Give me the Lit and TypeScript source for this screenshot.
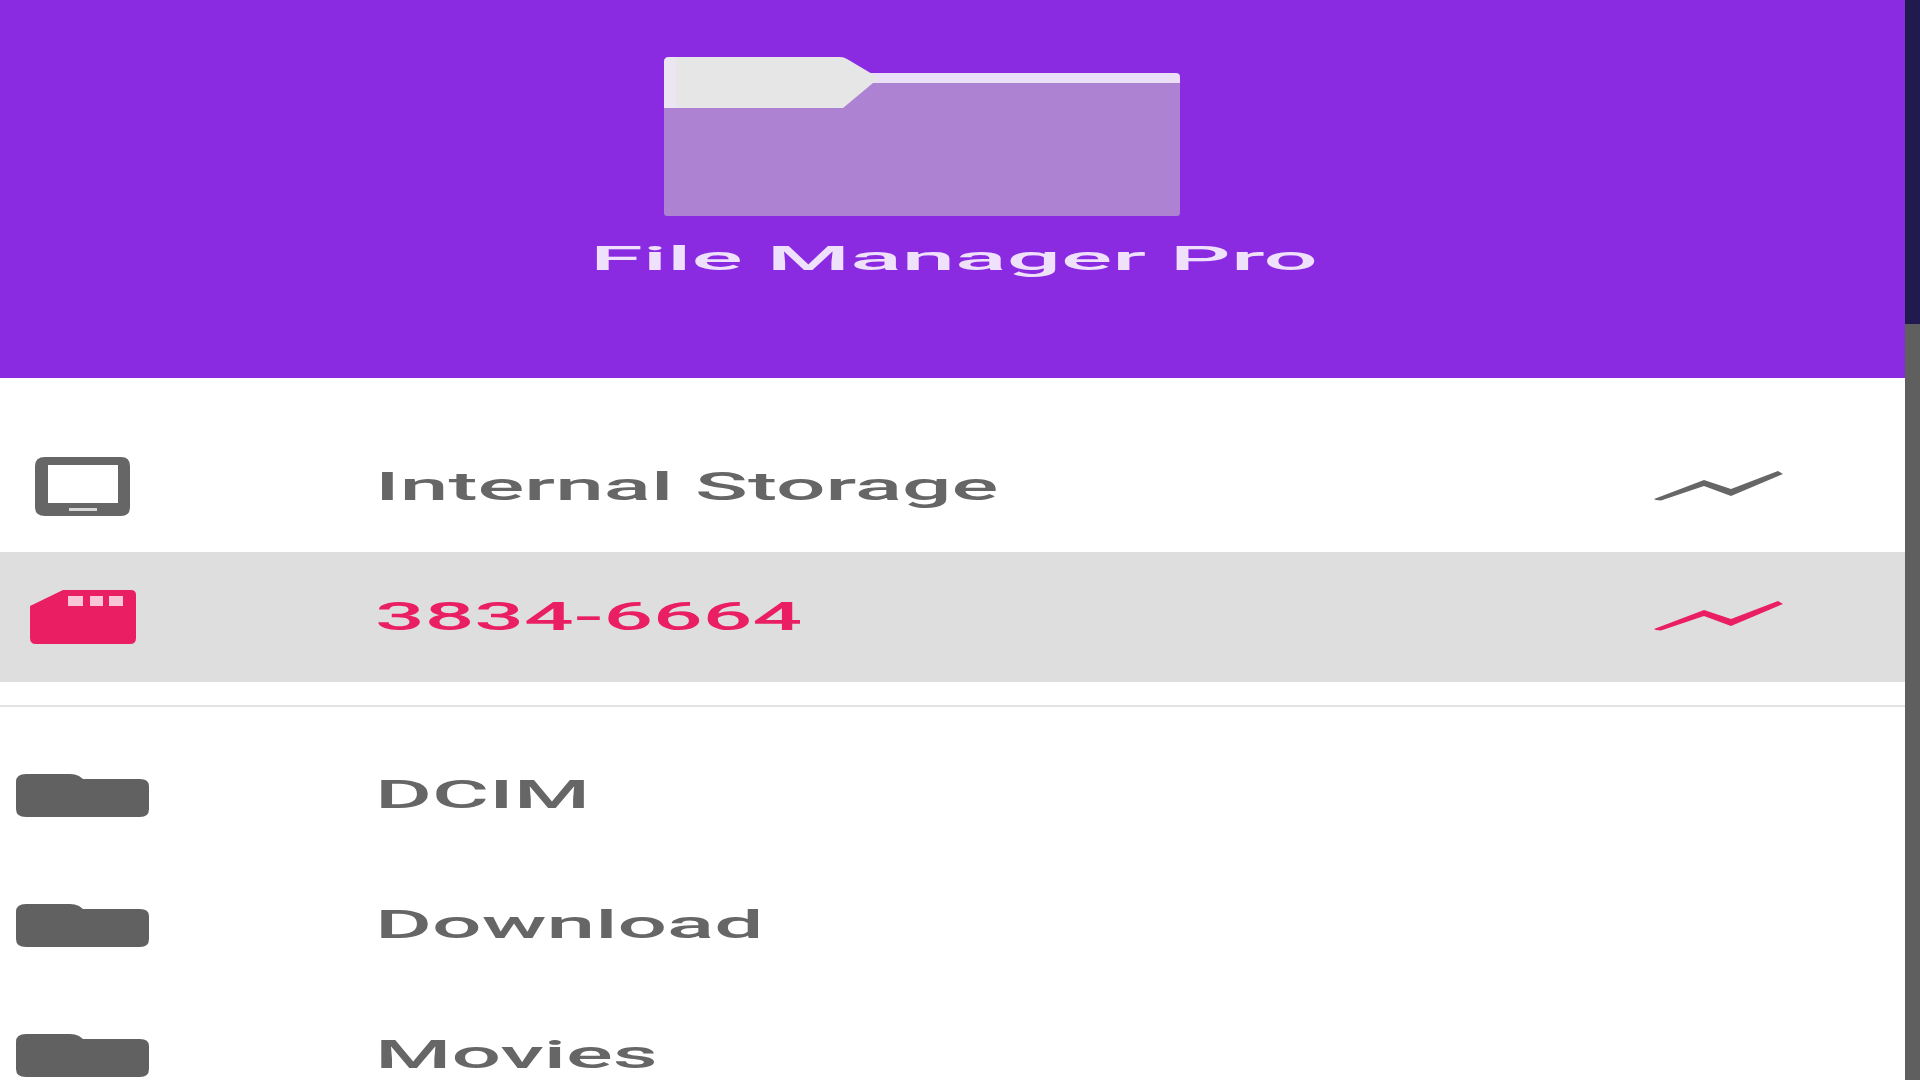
import { LitElement, html, css, svg } from "lit";
import { customElement } from "lit/decorators.js";

const folders = ["DCIM", "Download", "Movies"];

const trendIcon = svg`<svg class="trend" width="132" height="32" viewBox="0 0 132 32">
  <path d="M0 28 L2 29 L7 29.5 L50 15 L77 25 L129 3 L124 0 L77 18 L50 9 Z" fill="currentColor" />
</svg>`;

const tabletIcon = svg`<svg width="96" height="60" viewBox="0 0 96 60">
  <path fill-rule="evenodd" fill="currentColor" d="M10 0 H86 Q95 0 95 9 V50 Q95 59 86 59 H10 Q0 59 0 50 V9 Q0 0 10 0 Z M13 8 V46 H83 V8 Z" />
  <rect x="34" y="51" width="28" height="3" fill="#fff" opacity="0.75" />
</svg>`;

const sdIcon = svg`<svg width="106" height="54" viewBox="0 0 106 54">
  <path fill="currentColor" d="M33 0 H101 Q106 0 106 5 V48 Q106 54 100 54 H6 Q0 54 0 48 V16 Z" />
  <rect x="38" y="6" width="15" height="10" fill="#f9c6d8" />
  <rect x="60" y="6" width="13" height="10" fill="#f9c6d8" />
  <rect x="79" y="6" width="14" height="10" fill="#f9c6d8" />
</svg>`;

const folderIcon = svg`<svg width="133" height="43" viewBox="0 0 133 43">
  <path fill="#616161" d="M10 0 H54 Q59 0 63 2 L67 5 H124 Q133 5 133 12 V35 Q133 43 124 43 H10 Q0 43 0 35 V8 Q0 0 10 0 Z" />
</svg>`;

const logo = svg`<svg width="516" height="160" viewBox="0 0 516 160">
  <rect x="0" y="24" width="516" height="135" rx="3" fill="#ae82d3" />
  <path fill="#ebdff8" d="M200 16 H512 Q516 16 516 20 V26 H200 Z" />
  <path fill="#e6e6e6" d="M5 0 H176 Q180 0 183 2 L215 21 L179 51 H0 V5 Q0 0 5 0 Z" />
  <path fill="#f0e6fa" d="M0 5 Q0 0 5 0 H12 V51 H0 Z" opacity="0.6" />
</svg>`;

@customElement("app-root")
export class AppRoot extends LitElement {
  static styles = css`
    :host {
      display: flex;
      width: 1920px;
      height: 1080px;
      overflow: hidden;
      background: #fff;
      font-family: Roboto, "Liberation Sans", sans-serif;
    }

    .drawer {
      flex: 1;
      min-width: 0;
    }

    .header {
      height: 378px;
      box-sizing: border-box;
      padding-top: 57px;
      background: #8a2be2;
    }

    .logo {
      display: block;
      margin-left: 664px;
    }

    .logo svg {
      display: block;
    }

    .title {
      margin: 23px 0 0 590px;
      width: max-content;
      font-size: 33px;
      line-height: 38px;
      font-weight: 500;
      color: #efe0fb;
      transform: scaleX(2.9);
      transform-origin: left center;
      white-space: nowrap;
    }

    .list {
      padding-top: 44px;
    }

    .row {
      display: grid;
      grid-template-columns: 165px 210px 1fr auto;
      align-items: center;
      height: 130px;
      padding-right: 119px;
      color: #666;
    }

    .row--active {
      background: #dedede;
      color: #e91e63;
    }

    .row__icon {
      display: flex;
      justify-content: center;
    }

    .row__icon svg {
      display: block;
    }

    .row__label {
      grid-column: 3;
      width: max-content;
      font-size: 38px;
      font-weight: 500;
      line-height: 44px;
      transform: scaleX(2.3);
      transform-origin: left center;
      white-space: nowrap;
    }

    .row svg.trend {
      grid-column: 4;
      display: block;
    }

    .divider {
      height: 2px;
      margin: 23px 0;
      background: #e2e2e2;
    }

    .scroll {
      flex: none;
      display: flex;
      flex-direction: column;
      width: 15px;
      background: #5f5f5f;
    }

    .scroll__top {
      height: 324px;
      background: #211a4e;
    }
  `;

  renderRow(label: string, icon: unknown, trend = false, active = false) {
    return html`<div class="row ${active ? "row--active" : ""}">
      <div class="row__icon">${icon}</div>
      <div class="row__label">${label}</div>
      ${trend ? trendIcon : ""}
    </div>`;
  }

  render() {
    return html`<div class="drawer">
        <div class="header">
          <div class="logo">${logo}</div>
          <div class="title">File Manager Pro</div>
        </div>
        <div class="list">
          ${this.renderRow("Internal Storage", tabletIcon, true)}
          ${this.renderRow("3834-6664", sdIcon, true, true)}
          <div class="divider"></div>
          ${folders.map((name) => this.renderRow(name, folderIcon))}
        </div>
      </div>
      <div class="scroll"><div class="scroll__top"></div></div>`;
  }
}
